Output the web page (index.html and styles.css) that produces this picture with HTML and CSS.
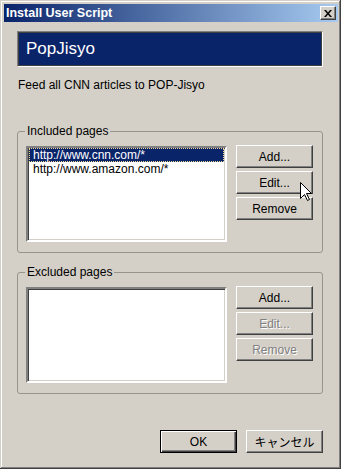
FILE: index.html
```html
<!DOCTYPE html>
<html lang="en">
<head>
    <meta charset="UTF-8">
    <title>Install User Script</title>
    <link rel="stylesheet" href="styles.css">
</head>
<body>
    <div class="window">
        <div class="titlebar">
            <span class="title">Install User Script</span>
            <span class="close">
                <svg width="8" height="7" viewBox="0 0 8 7"><path d="M0 0h2l2 2.5 2-2.5h2L5 3.5 8 7H6L4 4.5 2 7H0l3-3.5z" fill="#000"/></svg>
            </span>
        </div>
        <div class="content">
            <div class="banner">PopJisyo</div>
            <p class="desc">Feed all CNN articles to POP-Jisyo</p>

            <!-- Included pages -->
            <fieldset class="group">
                <legend>Included pages</legend>
                <div class="group-body">
                    <ul class="listbox">
                        <li class="item selected">http://www.cnn.com/*</li>
                        <li class="item">http://www.amazon.com/*</li>
                    </ul>
                    <div class="actions">
                        <button class="btn">Add...</button>
                        <button class="btn">Edit...</button>
                        <button class="btn">Remove</button>
                    </div>
                </div>
            </fieldset>

            <!-- Excluded pages -->
            <fieldset class="group group-excluded">
                <legend>Excluded pages</legend>
                <div class="group-body">
                    <ul class="listbox"></ul>
                    <div class="actions">
                        <button class="btn">Add...</button>
                        <button class="btn" disabled>Edit...</button>
                        <button class="btn" disabled>Remove</button>
                    </div>
                </div>
            </fieldset>

            <div class="footer">
                <button class="btn btn-default">OK</button>
                <button class="btn btn-jp">キャンセル</button>
            </div>
        </div>

        <svg class="cursor" width="13" height="20" viewBox="0 0 13 20">
            <path d="M0.5 0.5 L0.5 16.5 L4.5 12.5 L7.5 18.5 L9.5 17.5 L6.5 11.5 L11.5 11.5 Z" fill="#fff" stroke="#000" stroke-width="1"/>
        </svg>
    </div>
</body>
</html>
```

FILE: styles.css
```css
/* Classic dialog */
body {
    margin: 0;
    font-family: 'Liberation Sans', Arial, sans-serif;
    font-size: 12px;
    color: #000;
    background: #d4d0c8;
}

.window {
    position: relative;
    width: 341px;
    height: 469px;
    box-sizing: border-box;
    padding: 4px 3px 3px 4px;
    background: #d4d0c8;
    display: flex;
    flex-direction: column;
    box-shadow: inset -1px -1px #404040, inset 1px 1px #d4d0c8,
                inset -2px -2px #808080, inset 2px 2px #fff;
}

/* Title bar */
.titlebar {
    height: 18px;
    display: flex;
    align-items: center;
    justify-content: space-between;
    padding: 0 2px;
    background: linear-gradient(to right, #0a246a, #a6caf0);
}

.title {
    color: #fff;
    font-weight: bold;
    font-size: 12.5px;
}

.close {
    width: 16px;
    height: 14px;
    box-sizing: border-box;
    display: flex;
    align-items: center;
    justify-content: center;
    background: #d4d0c8;
    border: 1px solid;
    border-color: #fff #404040 #404040 #fff;
    box-shadow: inset -1px -1px #808080;
}

/* Content */
.content {
    flex: 1;
    display: flex;
    flex-direction: column;
    padding: 0 15px 0 13px;
}

.banner {
    margin-top: 9px;
    height: 36px;
    box-sizing: border-box;
    display: flex;
    align-items: center;
    padding-left: 8px;
    background: #0a246a;
    color: #fff;
    font-size: 17px;
    border: 1px solid;
    border-color: #808080 #fff #fff #808080;
    box-shadow: inset 1px 1px #404040, inset -1px -1px #404040;
}

.desc {
    margin: 11px 0 0 1px;
    line-height: 14px;
}

/* Group boxes */
.group {
    margin: 32px 0 0;
    padding: 6px 9px 10px 8px;
    border: 1px solid #97948d;
    border-radius: 3px;
    min-width: 0;
}

.group-excluded {
    margin-top: 12px;
}

.group legend {
    padding: 0 2px;
    margin-left: -1px;
    line-height: 15px;
}

.group-body {
    display: flex;
    gap: 9px;
}

.listbox {
    list-style: none;
    margin: 1px 0 0;
    padding: 0;
    width: 201px;
    height: 96px;
    box-sizing: border-box;
    background: #fff;
    border: 2px solid;
    border-color: #808080 #fff #fff #808080;
    box-shadow: inset 1px 1px #404040, inset -1px -1px #d4d0c8;
}

.item {
    height: 14px;
    line-height: 14px;
    padding-left: 4px;
    margin: 0 1px;
    white-space: nowrap;
}

.item.selected {
    background: #0a246a;
    color: #fff;
    outline: 1px dotted #f0d890;
    outline-offset: -1px;
}

.actions {
    display: flex;
    flex-direction: column;
    gap: 3px;
}

/* Buttons */
.btn {
    width: 77px;
    height: 23px;
    box-sizing: border-box;
    padding: 0;
    font-family: 'Liberation Sans', Arial, sans-serif;
    font-size: 12px;
    color: #000;
    background: #d4d0c8;
    border: 1px solid;
    border-color: #fff #404040 #404040 #fff;
    box-shadow: inset -1px -1px #808080;
    border-radius: 0;
}

.btn:disabled {
    color: #808080;
    text-shadow: 1px 1px #fff;
}

.btn-default {
    border-color: #000;
    box-shadow: inset 1px 1px #fff, inset -1px -1px #404040, inset -2px -2px #808080;
}

.btn-jp {
    font-family: 'Liberation Sans', 'Noto Sans CJK JP', sans-serif;
}

.footer {
    margin-top: auto;
    margin-bottom: 13px;
    display: flex;
    justify-content: flex-end;
    gap: 9px;
}

/* Mouse pointer over the dialog */
.cursor {
    position: absolute;
    left: 300px;
    top: 182px;
}
```
